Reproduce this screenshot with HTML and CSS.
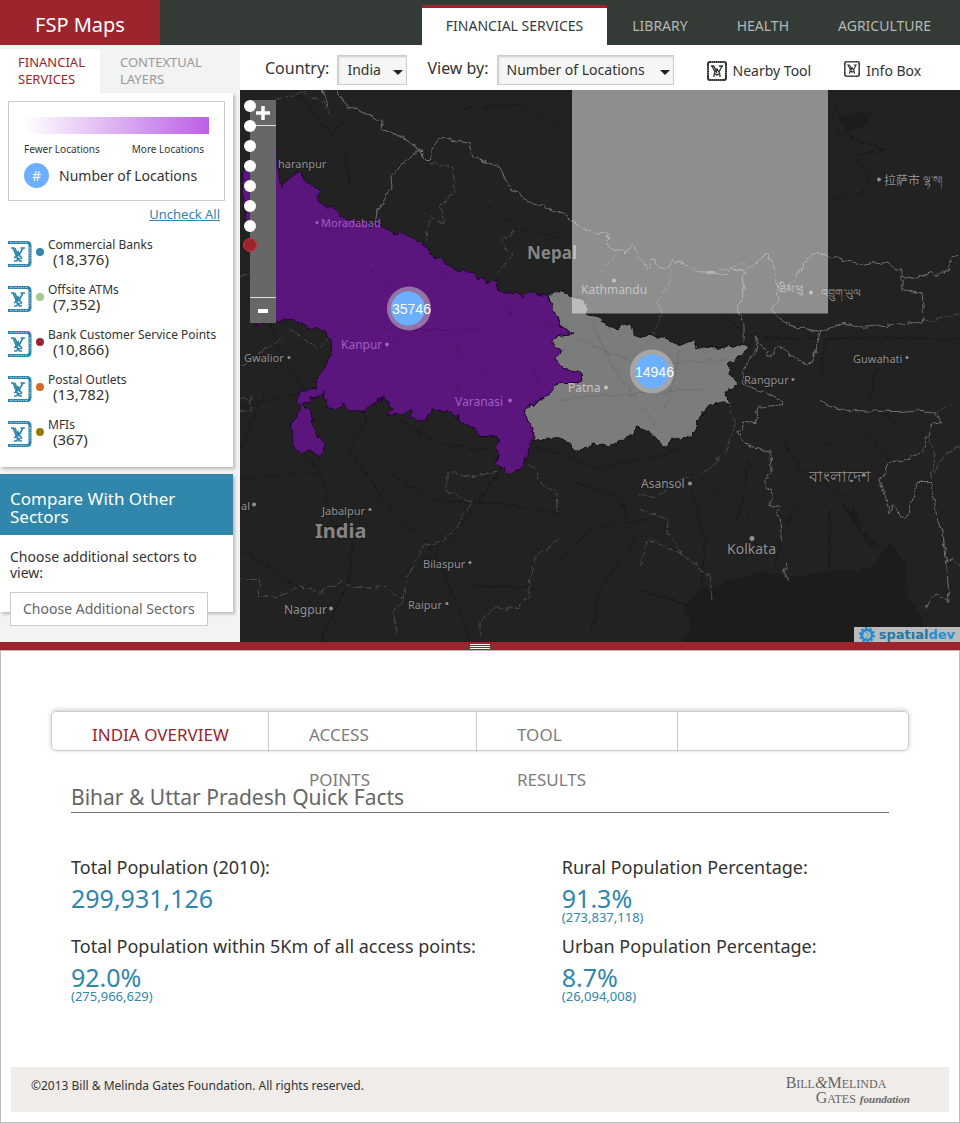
FILE: index.html
```html
<!DOCTYPE html>
<html lang="en">
<head>
<meta charset="utf-8">
<title>FSP Maps</title>
<link rel="stylesheet" href="styles.css">
</head>
<body>
<svg class="defs" aria-hidden="true">
  <symbol id="glyph" viewBox="0 0 24 28">
    <path d="M0 2.500H19Q22 2.500 22 5.500V22.500Q22 25.500 19 25.500H0" fill="none" stroke="currentColor" stroke-width="3"/>
    <path d="M2 2.500H19M2 25.500H19M22 7V21" fill="none" stroke="#fff" stroke-width="1" stroke-dasharray="2 1 1 1" opacity=".5"/>
    <path d="M3 8H6.500M12.500 8H17M5 8L8 15L10 12L11 15L15 8M7 8L10 16M10 12L12 15M10 15L7 17M11 15L14 18" fill="none" stroke="currentColor" stroke-width="1.600"/>
    <path d="M6 18Q9 16 10 18T14 18M6 21H8Q10 21 9 18M14 21H12Q10 21 11 18" fill="none" stroke="currentColor" stroke-width="1.400"/>
  </symbol>
  <symbol id="tool" viewBox="0 0 20 20">
    <rect x="1" y="1" width="18" height="18" rx="2" fill="none" stroke="currentColor" stroke-width="2"/>
    <path d="M4 1H17M4 19H16M1 5V15M19 5V15" stroke="#fff" stroke-width=".7" stroke-dasharray="1 1" opacity=".7"/>
    <path d="M4 5H7M12 5H16M5 5L8 11L10 8L12 11L15 5M7 5L10 12M8 11L7 13M12 11L13 13M7 16V14Q10 12 10 15Q10 12 13 14V16" fill="none" stroke="currentColor" stroke-width="1.300"/>
  </symbol>
</svg>

<header class="topbar">
  <a class="brand" href="#">FSP Maps</a>
  <nav class="sections">
    <a class="section active" href="#">FINANCIAL SERVICES</a>
    <a class="section" href="#">LIBRARY</a>
    <a class="section" href="#">HEALTH</a>
    <a class="section" href="#">AGRICULTURE</a>
  </nav>
</header>

<main>
<div class="workspace">
  <aside class="sidebar">
    <nav class="side-tabs">
      <a class="side-tab active" href="#">FINANCIAL<br>SERVICES</a>
      <a class="side-tab" href="#">CONTEXTUAL<br>LAYERS</a>
    </nav>
    <section class="panel layers">
      <div class="legend">
        <div class="ramp"></div>
        <div class="ramp-labels"><span>Fewer Locations</span><span>More Locations</span></div>
        <div class="count-key"><span class="hash">#</span><span>Number of Locations</span></div>
      </div>
      <a class="uncheck" href="#">Uncheck All</a>
      <ul class="layer-list">
        <li><label class="layer"><input type="checkbox" checked><svg class="glyph"><use href="#glyph"/></svg><i class="dot banks"></i><span class="layer-name">Commercial Banks<b>(18,376)</b></span></label></li>
        <li><label class="layer"><input type="checkbox" checked><svg class="glyph"><use href="#glyph"/></svg><i class="dot atms"></i><span class="layer-name">Offsite ATMs<b>(7,352)</b></span></label></li>
        <li><label class="layer"><input type="checkbox" checked><svg class="glyph"><use href="#glyph"/></svg><i class="dot points"></i><span class="layer-name">Bank Customer Service Points<b>(10,866)</b></span></label></li>
        <li><label class="layer"><input type="checkbox" checked><svg class="glyph"><use href="#glyph"/></svg><i class="dot postal"></i><span class="layer-name">Postal Outlets<b>(13,782)</b></span></label></li>
        <li><label class="layer"><input type="checkbox" checked><svg class="glyph"><use href="#glyph"/></svg><i class="dot mfis"></i><span class="layer-name">MFIs<b>(367)</b></span></label></li>
      </ul>
    </section>
    <section class="panel compare">
      <h2 class="compare-title">Compare With Other<br>Sectors</h2>
      <p class="compare-text">Choose additional sectors to<br>view:</p>
      <button class="choose" type="button">Choose Additional Sectors</button>
    </section>
  </aside>

  <div class="stage">
    <div class="toolbar">
      <label class="field-label" for="country">Country:</label>
      <span class="picker country-picker"><select id="country"><option>India</option></select></span>
      <label class="field-label view-label" for="view">View by:</label>
      <span class="picker view-picker"><select id="view"><option>Number of Locations</option></select></span>
      <button class="tool nearby" type="button"><svg class="tool-icon"><use href="#tool"/></svg>Nearby Tool</button>
      <button class="tool info" type="button"><svg class="tool-icon small"><use href="#tool"/></svg>Info Box</button>
    </div>
    <div class="map">
      <svg class="map-art" viewBox="240 90 720 553" preserveAspectRatio="xMidYMid slice" role="img" aria-label="Map of Bihar and Uttar Pradesh">
        <defs>
          <filter id="rough" x="-5%" y="-5%" width="110%" height="110%">
            <feTurbulence type="fractalNoise" baseFrequency=".13" numOctaves="2" seed="4"/>
            <feDisplacementMap in="SourceGraphic" scale="7" xChannelSelector="R" yChannelSelector="G"/>
          </filter>
        </defs>
        <rect x="240" y="90" width="720" height="553" fill="#222"/>
        <g filter="url(#rough)">
          <path class="water" d="M675 650L693 628L683 606L700 590L735 580L760 572L800 577L840 570L872 569L882 555L890 543L905 565L907 595L922 620L930 650ZM840 505L856 510L860 530L880 545L870 548L855 525ZM840 116L874 112L868 124L845 133Z"/>
          <path class="road" d="M270 325L280 352L304 391M240 409L265 402L304 393M302 448L320 475L328 500L330 520L353 540L351 565L347 585L338 605L325 630L320 645M353 390L367 420L350 450L390 510L425 540L450 585L470 640M392 475L430 500L500 505L560 515M240 480L290 475L320 475M300 95L318 120L345 150L350 190M330 135L345 120M240 550L272 570L300 590L330 575M470 585L540 590M280 360L265 380L262 400L240 450M700 480L745 510L760 535M690 490L705 540L700 610L640 590M750 460L738 520M570 480L620 500L635 540L600 590L590 640M780 435L800 470L850 500L870 540M820 450L860 430L890 460M800 500L780 540L775 570M830 510L830 570M840 90L830 130L885 150L855 157L870 180L860 195L830 200M750 335L790 340L880 338L960 340M825 340L820 380M880 345L870 400L900 430M480 200L520 230L570 240M460 110L520 105L560 125M720 310L740 330M420 570L450 540L480 500L520 440L600 470L680 450M560 560L590 530L650 520M400 420L440 445L490 450"/>
          <path class="state" d="M240 580L260 580L258 597L277 597L300 587L320 593L343 582L353 588L383 587L403 600L407 577L423 547L440 542L453 533L472 503L447 492L447 473L473 477L500 472M403 600L393 613L398 635M530 463L543 487L555 490L558 513M560 540L535 557L528 597L518 608L493 609L480 623L480 638M728 400L735 423L728 450L713 465L700 478L683 478L657 497L640 495M640 510L668 520L667 533L683 555L648 540L640 567M683 555L712 580L713 602M513 230L503 243L512 257L498 273M672 270L670 283L657 302L663 313L653 335M598 275L625 245M930 440L935 460L930 480L945 455L960 447M930 415L950 405M240 277L260 270M275 100L305 93L325 105L330 115M430 165L453 168L455 195L440 205L445 225L425 215M430 220L425 243M240 400L252 398L250 412L240 413M925 322L960 315M720 270L745 265M350 300L320 350L290 330M240 367L280 340"/>
          <path class="border" d="M320 82L325 100L327 107M336 90L347 107L363 112L383 122L382 130L407 140L420 150L425 160L431 160L437 140L447 139L470 143L473 157L480 160L500 168L512 190L530 202L560 213L580 227L595 235L608 233L607 245L613 251L627 252L633 246L643 265L650 270L653 258L657 267L667 270L672 261L687 265L697 273L727 275L730 269L745 272L767 255L774 267L777 290L780 300L772 309L777 318L790 326L820 332L845 323L860 328L917 323L924 322L922 293L902 290L902 272L887 263L867 265L847 262L833 257L818 253L803 263L797 277L787 287M902 277L917 279L932 272L937 276L950 270L950 260L960 256M745 272L742 300L737 308L744 327L744 345M420 150L407 160L391 177L392 187L385 193L385 205L378 208L375 224M744 370L758 348L755 337L770 357L780 347L790 355L810 367L822 332M742 371L745 385L780 400L782 405L758 408L755 423L745 422L738 433L743 443L770 453L771 472L763 480L773 497L770 506L782 507L777 513L782 543M786 565L784 573L787 582M820 400L830 407L847 411L900 412L923 410L937 415L942 423L931 425L925 450L903 462L890 463L881 482L890 513L893 505L902 519L909 515L917 483L932 483L937 520L943 533L947 567L949 602L935 593L927 608M947 563L953 559L960 567"/>
        </g>
        <g filter="url(#rough)">
          <path class="bihar" d="M548 295L558 293L561 291L570 298L582 299L586 305L586 314L597 318L608 328L618 329L630 324L634 335L640 338L650 335L663 338L680 346L694 340L697 347L707 349L730 346L735 349L744 343L748 349L733 362L728 365L730 375L738 385L725 393L728 405L717 402L707 408L698 420L693 437L670 440L665 449L653 435L635 427L630 437L607 447L595 444L577 452L569 443L557 438L533 442L533 433L526 418L527 408L547 397L560 383L577 383L583 380L580 375L563 368L555 359L563 350L551 343L558 337L573 335L560 325L553 310Z"/>
          <path class="pradesh" d="M276 149L279 178L281 186L288 180L298 173L303 176L308 184L322 191L316 197L323 206L332 207L340 215L346 220L355 221L363 223L372 228L376 223L383 226L396 237L398 231L407 236L420 243L427 248L433 258L440 259L457 272L464 270L480 279L487 283L496 281L498 291L518 294L523 299L528 293L540 294L548 298L553 310L560 325L573 335L558 337L551 343L563 350L555 359L563 368L580 375L583 380L577 383L560 383L547 397L527 408L526 418L533 433L533 442L528 447L527 457L518 472L507 474L497 463L498 453L497 437L483 437L473 428L462 425L458 417L445 412L432 410L425 422L410 418L412 410L403 414L387 416L392 410L385 398L373 402L365 412L348 410L342 402L339 411L327 408L323 392L317 398L303 403L312 418L317 437L325 442L325 452L320 457L307 450L299 453L293 443L291 425L302 407L297 402L299 393L317 388L318 380L327 363L333 350L327 335L318 328L308 328L292 320L278 321L262 323L256 328L253 235L247 222L242 190L244 170L255 160Z"/>
          <path class="inner-road" d="M286 200L290 260L278 310M310 210L360 260L410 300L450 340L510 400M280 305L340 325L400 330L480 330L570 325M350 380L385 345L420 330M440 260L460 320L455 400M500 300L530 340L540 400M580 340L600 350L640 365L735 360M590 320L620 380L660 430M560 400L620 395L700 390M680 350L670 400L650 430"/>
        </g>
        <g class="labels">
          <text x="527" y="259" class="nation">Nepal</text>
          <text x="821" y="297">འབྲུག་ཡུལ</text>
        </g>
        <rect x="572" y="90" width="256" height="224" fill="#fff" opacity=".49"/>
        <g class="labels">
          <text x="278" y="168">haranpur</text>
          <g class="on-purple"><text x="321" y="227">Moradabad</text><text x="341" y="349" class="mid">Kanpur</text><text x="455" y="406" class="mid">Varanasi</text>
          <circle cx="317" cy="223" r="1.500"/><circle cx="387" cy="345" r="2"/><circle cx="510" cy="401" r="2"/></g>
          <text x="315" y="538" class="nation large">India</text>
          <text x="581" y="294" class="mid bright">Kathmandu</text>
          <text x="568" y="392" class="mid bright">Patna</text>
          <text x="244" y="362">Gwalior</text>
          <text x="241" y="510">al</text>
          <text x="322" y="515">Jabalpur</text>
          <text x="423" y="568">Bilaspur</text>
          <text x="408" y="609">Raipur</text>
          <text x="284" y="614" class="mid">Nagpur</text>
          <text x="641" y="488" class="mid">Asansol</text>
          <text x="727" y="554" class="city">Kolkata</text>
          <text x="744" y="384">Rangpur</text>
          <text x="853" y="363">Guwahati</text>
          <text x="884" y="185" class="mid">拉萨市</text>
          <text x="923" y="184">ལྷ་ས།</text>
          <text x="779" y="293" class="bright">ཐིམ་ཕུ</text>
          <text x="809" y="482" class="bengal">বাংলাদেশ</text>
          <circle cx="289" cy="358" r="1.500"/><circle cx="254" cy="505" r="2"/><circle cx="370" cy="510" r="1.500"/><circle cx="470" cy="563" r="1.500"/><circle cx="447" cy="604" r="1.500"/><circle cx="331" cy="609" r="2"/><circle cx="690" cy="484" r="2"/><circle cx="752" cy="539" r="2.500"/><circle cx="793" cy="380" r="1.500"/><circle cx="907" cy="358" r="1.500"/><circle cx="879" cy="180" r="2"/>
          <g class="bright"><circle cx="614" cy="281" r="2"/><circle cx="606" cy="388" r="2"/><circle cx="811" cy="293" r="2"/></g>
        </g>
        <g class="cluster">
          <circle class="halo" cx="409" cy="309" r="22"/><circle class="core" cx="408" cy="309" r="17"/><text x="392" y="314">35746</text>
          <circle class="halo" cx="652" cy="372" r="22"/><circle class="core" cx="652" cy="372" r="17"/><text x="635" y="377">14946</text>
        </g>
      </svg>
      <div class="zoom">
        <button class="zoom-button" type="button" aria-label="Zoom in"><svg viewBox="0 0 16 16"><path d="M8 1V15M1 8H15" stroke="#fff" stroke-width="3.500"/></svg></button>
        <div class="stops"><i></i><i></i><i></i><i></i><i></i><i></i><i></i><i class="current"></i></div>
        <button class="zoom-button bottom" type="button" aria-label="Zoom out"><svg viewBox="0 0 16 16"><path d="M3 8H13" stroke="#fff" stroke-width="4"/></svg></button>
      </div>
      <a class="credit" href="#">
        <svg viewBox="0 0 16 16"><circle cx="8" cy="8" r="5" fill="#a4c4c4" stroke="#2489cf" stroke-width="2.500"/><circle cx="8" cy="8" r="7" fill="none" stroke="#2489cf" stroke-width="2" stroke-dasharray="2.500 1.900"/><path d="M6 5L10 7L7 10L10 12" stroke="#819c94" fill="none"/></svg>
        <span>spatıal<em>dev</em></span>
      </a>
    </div>
  </div>
</div>

<div class="splitter"><span class="grip"></span></div>

<section class="details">
  <nav class="detail-tabs">
    <a class="detail-tab first" href="#">INDIA OVERVIEW</a>
    <a class="detail-tab second" href="#">ACCESS<br>POINTS</a>
    <a class="detail-tab third" href="#">TOOL<br>RESULTS</a>
  </nav>
  <div class="facts">
    <h1 class="facts-title">Bihar &amp; Uttar Pradesh Quick Facts</h1>
    <dl class="fact-grid">
      <div class="fact"><dt>Total Population (2010):</dt><dd>299,931,126</dd></div>
      <div class="fact"><dt>Rural Population Percentage:</dt><dd>91.3%<small>(273,837,118)</small></dd></div>
      <div class="fact"><dt>Total Population within 5Km of all access points:</dt><dd>92.0%<small>(275,966,629)</small></dd></div>
      <div class="fact"><dt>Urban Population Percentage:</dt><dd>8.7%<small>(26,094,008)</small></dd></div>
    </dl>
  </div>
  <footer class="footer">
    <span>©2013 Bill &amp; Melinda Gates Foundation. All rights reserved.</span>
    <a class="foundation" href="#"><span>B<small>ILL</small><i>&amp;</i>M<small>ELINDA</small></span><span class="second-line">G<small>ATES</small> <em>foundation</em></span></a>
  </footer>
</section>
</main>
</body>
</html>
```
FILE: styles.css
```css
* { box-sizing: border-box; }
body { margin: 0; min-height: 100vh; display: flex; flex-direction: column; background: #fff; color: #333; font: 15px/20px "Noto Sans", "Open Sans", sans-serif; }
a { color: inherit; text-decoration: none; }
button, select { font: inherit; color: inherit; }
h1, h2, p, ul, dl, dd { margin: 0; padding: 0; font-weight: 400; }
ul { list-style: none; }
main { flex: 1; display: flex; flex-direction: column; }
.defs { position: absolute; width: 0; height: 0; }

.topbar { display: flex; justify-content: space-between; height: 45px; background: #343a36; }
.brand { width: 160px; padding-top: 4px; background: #9b242d; color: #fff; font-size: 20px; line-height: 41px; text-align: center; }
.sections { display: flex; align-items: flex-end; gap: 1px; padding-right: 5px; }
.section { height: 40px; padding: 0 24px; border-top: 3px solid transparent; color: #b4b8b6; font-size: 14px; line-height: 36px; }
.section.active { background: #fff; border-color: #9b242d; color: #333a44; }

.workspace { display: flex; }
.sidebar { flex: none; width: 240px; padding-bottom: 30px; background: #f3f3f3; }
.side-tabs { display: flex; padding-top: 4px; }
.side-tab { height: 44px; padding: 5px 18px 0; color: #999; font-size: 13px; line-height: 17px; }
.side-tab.active { width: 100px; background: #fff; color: #9b242d; }
.side-tab + .side-tab { padding-left: 20px; }
.panel { margin-right: 7px; background: #fff; box-shadow: 2px 2px 3px #bbb; }
.layers { padding: 8px 8px 6px; }
.legend { height: 100px; padding: 15px; border: 1px solid #ccc; }
.ramp { height: 17px; background: linear-gradient(90deg, #fff, #bb60e5); }
.ramp-labels { display: flex; justify-content: space-between; padding: 8px 5px 0 0; font-size: 10px; line-height: 14px; }
.count-key { display: flex; align-items: center; gap: 10px; padding-top: 7px; font-size: 14px; }
.hash { width: 25px; height: 25px; border-radius: 50%; background: #6caeff; color: #fff; line-height: 26px; text-align: center; }
.uncheck { display: block; padding: 3px 5px 0 0; color: #3086ab; font-size: 13px; text-align: right; text-decoration: underline; }
.layer-list { padding-top: 12px; }
.layer { position: relative; display: flex; height: 45px; }
.layer input { position: absolute; width: 24px; height: 26px; margin: 5px 0; opacity: 0; }
.glyph { flex: none; width: 24px; height: 28px; margin-top: 4px; color: #3086ab; }
.dot { flex: none; width: 8px; height: 8px; margin: 12px 4px 0; border-radius: 50%; }
.banks { background: #3086ab; }
.atms { background: #a0ca8c; }
.points { background: #9b242d; }
.postal { background: #d06a28; }
.mfis { background: #947c00; }
.layer-name { padding-top: 1px; font-size: 12px; line-height: 15px; white-space: nowrap; }
.layer-name b { display: block; padding-left: 5px; font-size: 15px; line-height: 14px; font-weight: 400; }
.compare { height: 138px; margin-top: 7px; }
.compare-title { padding: 16px 10px 9px; background: #3086ab; color: #fff; font-size: 17px; line-height: 18px; }
.compare-text { padding: 14px 10px 11px; font-size: 14px; line-height: 16px; }
.choose { height: 34px; margin-left: 10px; padding: 0 12px; border: 1px solid #ccc; background: #fff; color: #666; font-size: 14px; }

.stage { flex: 1; display: flex; flex-direction: column; min-width: 0; }
.toolbar { display: flex; align-items: flex-start; height: 45px; padding: 10px 0 0 25px; white-space: nowrap; }
.field-label { font-size: 16px; line-height: 27px; }
.view-label { margin-left: 20px; }
.picker { position: relative; margin-left: 8px; }
.picker::after { content: ""; position: absolute; right: 4px; top: 15px; border: 5px solid transparent; border-top-color: #222; border-bottom: 0; pointer-events: none; }
.picker select { appearance: none; width: 100%; height: 30px; padding: 0 9px; border: 1px solid #ccc; border-radius: 0; background: #f6f6f6; box-shadow: inset 1px 1px 2px #ccc; font-size: 14px; }
.country-picker { width: 70px; }
.view-picker { width: 177px; }
.tool { display: flex; align-items: center; gap: 6px; height: 32px; padding: 0; border: 0; background: none; font-size: 14px; }
.nearby { margin-left: 33px; }
.info { margin-left: 33px; }
.tool-icon { width: 20px; height: 20px; }
.tool-icon.small { width: 16px; height: 16px; margin-bottom: 4px; }

.map { position: relative; flex: 1; overflow: hidden; background: #222; }
.map-art { position: absolute; inset: 0; width: 100%; height: 100%; }
.water { fill: #1c1c1c; }
.road { fill: none; stroke: #1a1a1a; stroke-width: 1; }
.inner-road { fill: none; stroke: #000; stroke-width: 1; opacity: .1; }
.state { fill: none; stroke: #4b4b4b; stroke-width: 1; stroke-dasharray: 8 2; }
.border { fill: none; stroke: #707070; stroke-width: 1; }
.bihar { fill: #7c7c7c; stroke: #111; stroke-width: 1; }
.pradesh { fill: #5a147c; stroke: #240533; stroke-width: 1; }
.labels { fill: #909090; font: 11px "Noto Sans", "Open Sans", "Noto Sans CJK SC", sans-serif; }
.labels text { paint-order: stroke; stroke: #1a1a1a; stroke-opacity: .5; stroke-width: 2px; }
.labels .mid { font-size: 12px; }
.labels .city { font-size: 14px; }
.labels .nation { font-size: 17px; font-weight: 700; fill: #858585; }
.labels .large { font-size: 20px; }
.labels .bengal { font-size: 16px; }
.on-purple { fill: #a35cc4; }
.labels .on-purple text { stroke: none; }
.bright, .labels .bright { fill: #c4c4c4; stroke: none; }
.halo { fill: #cfcfcf; opacity: .5; }
.core { fill: #6caeff; }
.cluster text { fill: #fff; font: 14px "Liberation Sans", Arial, sans-serif; }

.zoom { position: absolute; left: 10px; top: 10px; display: flex; flex-direction: column; width: 26px; height: 223px; background: #676767; }
.zoom-button { height: 26px; padding: 0; border: 0; border-bottom: 1px solid #ddd; background: none; }
.zoom-button svg { display: block; width: 16px; height: 16px; margin: 0 auto; }
.zoom-button.bottom { border-top: 1px solid #ddd; border-bottom: 0; margin-top: auto; }
.stops { position: absolute; left: -6px; top: 0; display: flex; flex-direction: column; gap: 8px; }
.stops i { width: 12px; height: 12px; border-radius: 50%; background: #fff; }
.stops .current { width: 14px; height: 14px; margin: -2px 0 0 -1px; border: 1px solid #d0303c; background: #9b242d; }
.credit { position: absolute; right: 0; bottom: 0; display: flex; align-items: center; gap: 4px; height: 15px; padding: 0 5px; background: #bbb; color: #2478a5; font: 700 13px/15px "DejaVu Sans", sans-serif; overflow: hidden; }
.credit svg { width: 16px; height: 16px; }
.credit em { color: #2591d4; font-style: normal; }

.splitter { display: flex; align-items: center; justify-content: center; height: 8px; background: #9b242d; }
.grip { width: 20px; height: 5px; border: solid #fff; border-width: 1px 0; background: linear-gradient(#9b242d 1px, #fff 1px, #fff 2px, #9b242d 2px); }

.details { flex: 1; display: flex; flex-direction: column; padding: 60px 10px 10px; border: 1px solid #bbb; }
.detail-tabs { display: flex; height: 40px; margin: 0 40px; border: 1px solid #ccc; border-radius: 5px; box-shadow: 0 -1px 5px #ccc; color: #7d7d7d; font-size: 17px; line-height: 45px; }
.detail-tab { height: 40px; padding-left: 40px; border-right: 1px solid #ccc; }
.first { width: 217px; color: #9b242d; }
.second { width: 208px; }
.third { width: 201px; }
.facts { margin: 0 60px; padding-top: 33px; }
.facts-title { padding-bottom: 1px; border-bottom: 1px solid #777; color: #666; font-size: 21px; line-height: 27px; }
.fact-grid { display: grid; grid-template-columns: 3fr 2fr; padding-top: 41px; }
.fact { height: 79px; white-space: nowrap; }
.fact dt { font-size: 18px; line-height: 26px; }
.fact dd { padding-top: 5px; color: #3086ab; font-size: 25px; line-height: 26px; }
.fact dd small { display: block; font-size: 13px; line-height: 12px; }
.footer { display: flex; justify-content: space-between; height: 45px; margin-top: auto; padding: 9px 39px 0 20px; background: #f0ece9; font-size: 12px; }
.foundation { display: flex; flex-direction: column; color: #666; font: 16px/13px "Liberation Serif", serif; }
.foundation small { font-size: 12px; }
.foundation em { font-size: 11px; font-weight: 700; }
.foundation .second-line { padding-left: 30px; }
```
